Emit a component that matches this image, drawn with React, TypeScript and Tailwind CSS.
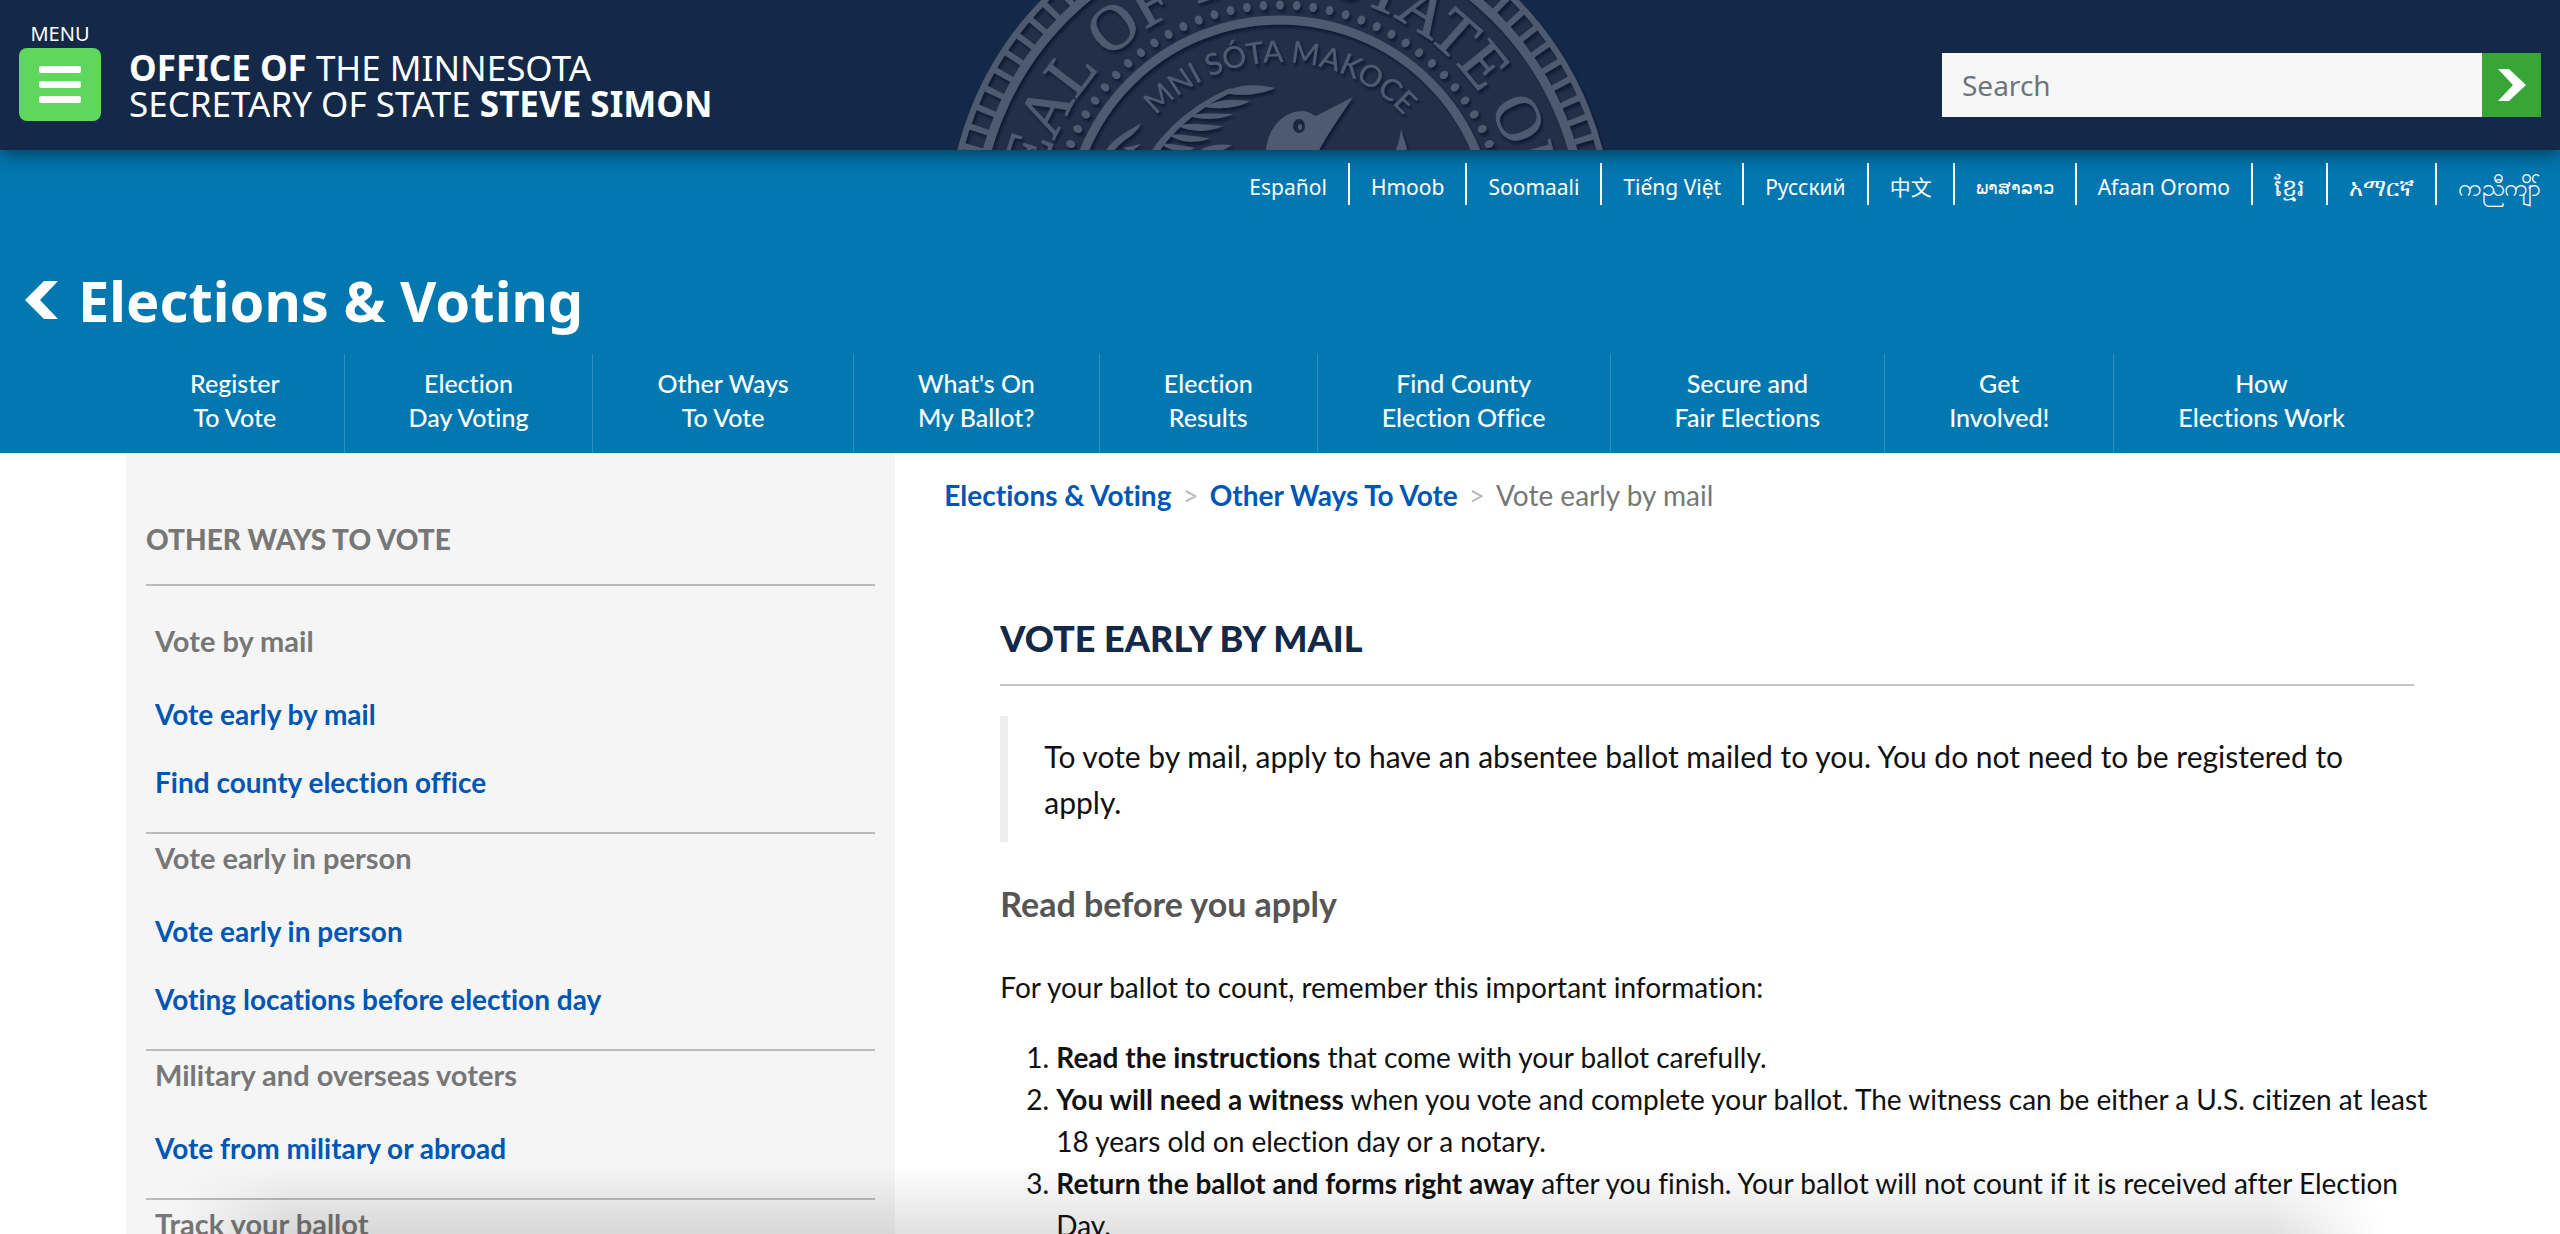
interface NavGroup {
  title: string;
  links: string[];
}

const languages = [
  { label: "Español", lang: "es", size: "text-[21px]" },
  { label: "Hmoob", lang: "hmn", size: "text-[21px]" },
  { label: "Soomaali", lang: "so", size: "text-[21px]" },
  { label: "Tiếng Việt", lang: "vi", size: "text-[21px]" },
  { label: "Русский", lang: "ru", size: "text-[21px]" },
  { label: "中文", lang: "zh", size: "text-[21px]" },
  { label: "ພາສາລາວ", lang: "lo", size: "text-[18px]" },
  { label: "Afaan Oromo", lang: "om", size: "text-[21px]" },
  { label: "ខ្មែរ", lang: "km", size: "text-[24px]" },
  { label: "አማርኛ", lang: "am", size: "text-[24px]" },
  { label: "ကညီကျိာ်", lang: "ksw", size: "text-[24px]" },
];

const sections = [
  ["Register", "To Vote"],
  ["Election", "Day Voting"],
  ["Other Ways", "To Vote"],
  ["What's On", "My Ballot?"],
  ["Election", "Results"],
  ["Find County", "Election Office"],
  ["Secure and", "Fair Elections"],
  ["Get", "Involved!"],
  ["How", "Elections Work"],
];

const groups: NavGroup[] = [
  { title: "Vote by mail", links: ["Vote early by mail", "Find county election office"] },
  { title: "Vote early in person", links: ["Vote early in person", "Voting locations before election day"] },
  { title: "Military and overseas voters", links: ["Vote from military or abroad"] },
  { title: "Track your ballot", links: [] },
];

// Angles (degrees from the top) of the beads round the inner ring
const beads = Array.from({ length: 41 }, (_, i) => (i - 20) * 4.2);

function StateSeal() {
  return (
    <svg viewBox="0 0 666 150" className="h-[150px] w-[666px]" aria-hidden="true">
      <defs>
        <path id="outer-arc" d="M90 232 A243 243 0 0 1 576 232" />
        <path id="inner-arc" d="M163 232 A170 170 0 0 1 503 232" />
        <filter id="relief" x="-5%" y="-5%" width="110%" height="110%">
          <feDropShadow dx="2" dy="3" stdDeviation="1" floodColor="#0c1830" floodOpacity="0.9" />
        </filter>
      </defs>
      <circle cx="333" cy="232" r="333" fill="#222f47" />
      <g filter="url(#relief)" fill="none" stroke="#4e5a70">
        <circle cx="333" cy="232" r="330" strokeWidth="6" />
        <circle cx="333" cy="232" r="304" strokeWidth="9" />
        <circle cx="333" cy="232" r="318" strokeWidth="20" strokeDasharray="6 14" />
        <circle cx="333" cy="232" r="212" strokeWidth="9" />
      </g>
      <g filter="url(#relief)" fill="#4e5a70">
        {beads.map((angle) => (
          <ellipse key={angle} cx="333" cy="5" rx="3.8" ry="4.6" transform={`rotate(${angle} 333 232)`} />
        ))}
        <text className="font-['Liberation_Serif',serif] text-[64px]" textAnchor="middle" stroke="#4e5a70" strokeWidth="1">
          <textPath href="#outer-arc" startOffset="48%">SEAL OF THE STATE OF</textPath>
        </text>
        <text className="font-[Lato,sans-serif] text-[30px] font-medium" textAnchor="middle">
          <textPath href="#inner-arc" startOffset="50%">MNI SÓTA MAKOCE</textPath>
        </text>
        {/* Wing feathers along a thin curved spine */}
        <path d="M204 152 C222 124 254 100 284 88 L286 92 C258 104 230 126 212 152Z" />
        <path d="M278 93 C288 85 306 83 328 88 C316 94 296 97 278 93Z" />
        <path d="M258 107 C270 99 286 99 303 101 C293 107 276 110 258 107Z" />
        <path d="M242 116 C254 112 270 114 286 114 C276 119 258 121 242 116Z" />
        <path d="M231 126 C243 122 260 125 276 126 C264 132 246 133 231 126Z" />
        <path d="M222 135 C233 133 250 137 263 138 C251 144 234 143 222 135Z" />
        <path d="M214 144 C226 143 236 146 248 148 C240 153 224 152 214 144Z" />
        <path d="M250 152 C262 144 274 144 285 145 C279 149 274 151 270 153Z" />
        <path d="M158 152 C166 138 180 132 194 123 C190 132 184 136 178 140 C172 145 168 149 166 152Z" />
        <path d="M176 148 L194 144 L184 152Z" />
        {/* Loon head and beak */}
        <path d="M319 152 C320 128 337 111 355 111 C361 111 364 114 369 116 L406 97 C394 115 382 132 371 152Z" />
        <path d="M454 129 C456 138 460 145 460 152 L448 152 C451 145 453 138 454 129Z" />
      </g>
      <ellipse cx="352" cy="126" rx="6" ry="7" fill="#1a2740" />
      <ellipse cx="353" cy="127" rx="2" ry="3" fill="#4e5a70" />
    </svg>
  );
}

export default function App() {
  return (
    <div className="relative h-screen overflow-hidden bg-white font-[Lato,sans-serif] text-[#111] [font-variant-ligatures:none]">
      <header className="relative z-10 flex h-[150px] items-start justify-between bg-[#142847] font-['Noto_Sans',sans-serif] text-white shadow-[0_2px_20px_rgba(0,0,0,0.6)]">
        <div className="flex pl-[19px]">
          <div className="flex flex-col items-center">
            <label htmlFor="menu" className="pt-5 text-[20px] leading-7">MENU</label>
            <button
              id="menu"
              type="button"
              className="flex h-[73px] w-[82px] flex-col items-center justify-center gap-2 rounded-lg bg-[#5fd75f]"
            >
              <span className="h-[7px] w-[42px] rounded-xs bg-white" />
              <span className="h-[7px] w-[42px] rounded-xs bg-white" />
              <span className="h-[7px] w-[42px] rounded-xs bg-white" />
            </button>
          </div>
          <a href="#home" className="ml-7 pt-[50px] text-[35px] leading-9 whitespace-nowrap">
            <b className="font-bold">OFFICE OF</b> THE MINNESOTA
            <br />
            SECRETARY OF STATE <b className="font-bold">STEVE SIMON</b>
          </a>
        </div>
        <div className="absolute top-0 left-1/2 -translate-x-1/2">
          <StateSeal />
        </div>
        <form className="mt-[53px] mr-[19px] flex h-16">
          <input
            type="text"
            aria-label="Search"
            placeholder="Search"
            className="w-[540px] bg-[#f7f7f7] px-5 text-[28px] text-gray-800 placeholder:text-[#6c757d]"
          />
          <button type="submit" aria-label="Submit search" className="flex w-[59px] items-center justify-center bg-[#37a637]">
            <svg viewBox="0 0 28 32" className="h-8 w-7" fill="#fff">
              <path d="M0 0H11L28 16L11 32H0L15 16Z" />
            </svg>
          </button>
        </form>
      </header>

      <div className="bg-[#0277b0] text-white">
        <ul className="flex justify-end pt-[13px] font-['Noto_Sans','Noto_Sans_CJK_SC',sans-serif] leading-[40px]">
          {languages.map((item) => (
            <li key={item.lang} className="h-[42px] border-r-2 border-white px-[21px] pt-1 last:border-r-0 last:pr-[19px]">
              <a href={`#${item.lang}`} lang={item.lang} className={`block ${item.size}`}>{item.label}</a>
            </li>
          ))}
        </ul>

        <a href="#elections" className="mt-[57px] mb-4 flex items-center gap-5 pl-[25px] font-['Noto_Sans',sans-serif] text-[56px] leading-[76px] font-bold">
          <svg viewBox="0 0 33 38" className="h-[38px] w-[33px]" fill="#fff">
            <path d="M33 0H19L0 19L19 38H33L15 19Z" />
          </svg>
          Elections &amp; Voting
        </a>

        <nav className="mx-auto flex max-w-[2308px]">
          {sections.map(([first, second]) => (
            <a
              key={first + second}
              href="#section"
              className="border-r border-[#2f8fc2] px-16 pt-3 pb-[19px] text-center text-[25px] leading-[34px] font-medium whitespace-nowrap last:border-r-0"
            >
              {first}
              <br />
              {second}
            </a>
          ))}
        </nav>
      </div>

      <div className="mx-auto flex max-w-[2308px]">
        <aside className="w-1/3 shrink-0 bg-[#f5f5f5] px-5 pt-[70px] pb-20">
          <h2 className="mb-[31px] border-b-2 border-[#bbb] pb-[29px] text-[28px] leading-8 font-black text-[#777]">
            OTHER WAYS TO VOTE
          </h2>
          {groups.map((group) => (
            <section key={group.title} className="border-b-2 border-[#bbb] px-[9px] pt-1 pb-4 last:border-b-0">
              <h3 className="mb-[19px] text-[29px] leading-10 font-bold text-[#777]">{group.title}</h3>
              <ul className="text-[28px] leading-[68px] font-bold text-[#0056b3]">
                {group.links.map((link) => (
                  <li key={link}>
                    <a href="#page">{link}</a>
                  </li>
                ))}
              </ul>
            </section>
          ))}
        </aside>

        <main className="flex-1 pt-[22px] pr-5 pl-[49px]">
          <nav className="flex gap-[11px] text-[28px] leading-10 text-[#777]">
            <a href="#elections" className="font-bold text-[#0056b3]">Elections &amp; Voting</a>
            <span className="text-[#bbb]">&gt;</span>
            <a href="#ways" className="font-bold text-[#0056b3]">Other Ways To Vote</a>
            <span className="text-[#bbb]">&gt;</span>
            <span>Vote early by mail</span>
          </nav>

          <article className="mt-[101px] ml-14">
            <h1 className="border-b-2 border-[#c4c4c4] pb-6 text-[36px] leading-[44px] font-black text-[#142847]">
              VOTE EARLY BY MAIL
            </h1>
            <blockquote className="mt-[30px] border-l-8 border-[#eee] py-[17px] pr-9 pl-9 text-[30px] leading-[46px]">
              To vote by mail, apply to have an absentee ballot mailed to you. You do not need to be registered to apply.
            </blockquote>
            <h2 className="mt-[42px] text-[34px] leading-10 font-bold text-[#555]">Read before you apply</h2>
            <p className="mt-[42px] text-[28px] leading-[42px]">
              For your ballot to count, remember this important information:
            </p>
            <ol className="mt-7 -mr-7 list-decimal pl-14 text-[28px] leading-[42px]">
              <li>
                <b>Read the instructions</b> that come with your ballot carefully.
              </li>
              <li>
                <b>You will need a witness</b> when you vote and complete your ballot. The witness can be either a U.S. citizen at least 18 years old on election day or a notary.
              </li>
              <li>
                <b>Return the ballot and forms right away</b> after you finish. Your ballot will not count if it is received after Election Day.
              </li>
            </ol>
          </article>
        </main>
      </div>

      {/* Shade along the bottom edge of the window */}
      <div className="pointer-events-none absolute inset-x-[180px] bottom-0 h-[68px] bg-linear-to-b from-transparent to-black/12 mask-x-from-95%" />
    </div>
  );
}
